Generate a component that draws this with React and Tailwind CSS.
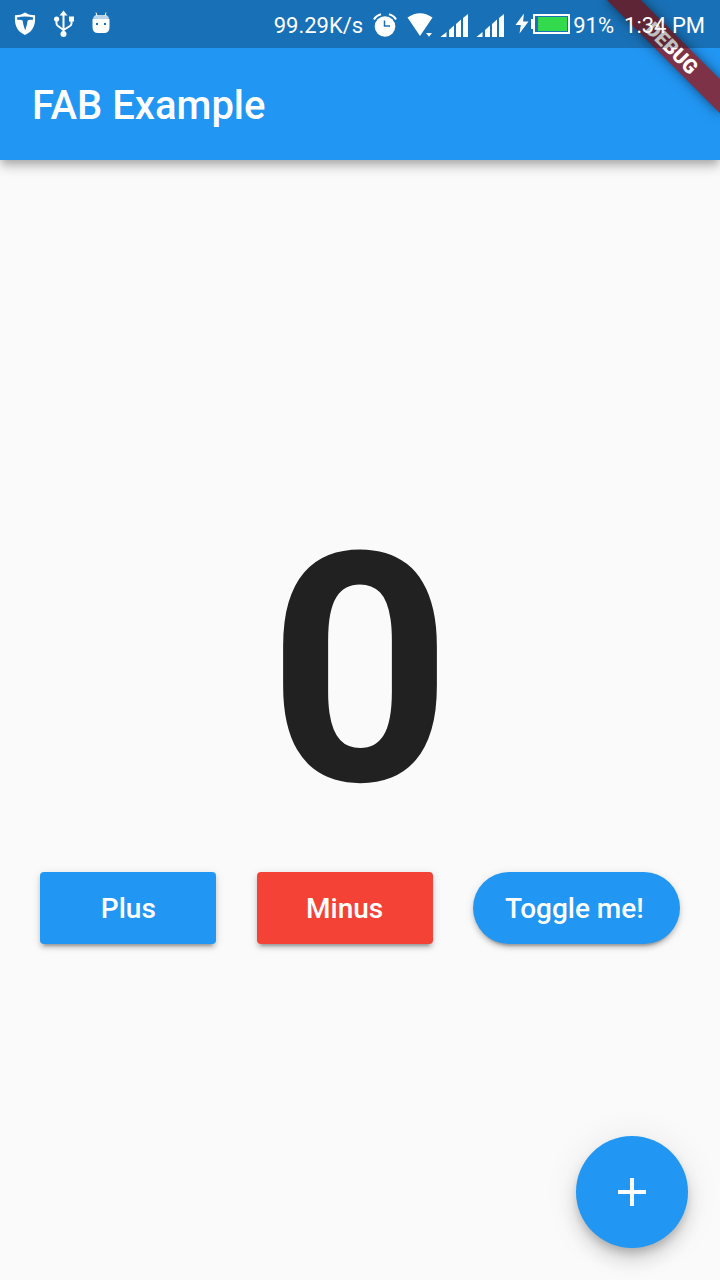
import { useState } from "react";

function ShieldIcon() {
  return (
    <svg width="22" height="24" viewBox="0 0 22 24" aria-hidden="true">
      <path d="M11 0.5 C14 2.6 17.5 3.2 21 3.3 C21.6 12 20 19 11 23 C2 19 0.4 12 1 3.3 C4.500 3.200 8 2.600 11 0.500 Z" fill="#fff" />
      <path d="M3 5.600 Q11 3.600 19.300 5.600 L18.700 8 Q15.500 7.200 13.700 8.400 Q13 13 11.200 18.500 Q9.200 13 8.600 8.400 Q6.500 7.200 3.500 8 Z" fill="#1b71b6" />
    </svg>
  );
}

function UsbIcon() {
  return (
    <svg width="20" height="28" viewBox="0 0 20 28" aria-hidden="true">
      <path d="M9.500 4 V24 M2.500 9 V13.500 Q2.500 15 4 16 L9.500 20 M17.500 9 V13.500 Q17.500 15 16 16 L9.500 20" fill="none" stroke="#fff" strokeWidth="2" />
      <path d="M9.500 0.500 L13.500 5.500 H5.500 Z" fill="#fff" />
      <circle cx="2.600" cy="9" r="2.600" fill="#fff" />
      <rect x="15" y="6.500" width="5" height="5" fill="#fff" />
      <circle cx="9.500" cy="24" r="3" fill="#fff" />
    </svg>
  );
}

function AndroidIcon() {
  return (
    <svg width="18" height="24" viewBox="0 0 18 24" aria-hidden="true">
      <path d="M4 0.500 L5 4 M14 0.500 L13 4" stroke="#fff" strokeWidth="1" />
      <path d="M1 8 Q1 3 5 3 H13 Q17 3 17 8 Z" fill="#fff" fillOpacity="0.7" />
      <path d="M0.500 7 H17.500 V15 Q17.500 21 12 21 H6 Q0.500 21 0.500 15 Z" fill="#fff" />
      <rect x="4" y="11" width="2" height="2" fill="#1b71b6" />
      <rect x="12" y="11" width="2" height="2" fill="#1b71b6" />
    </svg>
  );
}

function AlarmIcon() {
  return (
    <svg width="24" height="24" viewBox="0 0 24 24" aria-hidden="true">
      <circle cx="12" cy="13.500" r="10.300" fill="#fff" />
      <path d="M1 6.500 Q3 2.500 8 1.200 M23 6.500 Q21 2.500 16 1.200" fill="none" stroke="#fff" strokeWidth="2" />
      <path d="M11.500 7.500 V13 H17" fill="none" stroke="#1b71b6" strokeWidth="1.500" />
    </svg>
  );
}

function WifiIcon() {
  return (
    <svg width="27" height="24" viewBox="0 0 27 24" aria-hidden="true">
      <path d="M0.500 4.500 Q13 -4.200 25.500 4.500 L13 23 Z" fill="#fff" />
      <path d="M18.500 19 H27 L22 24.500 L17 19 Z" fill="#1b71b6" />
      <path d="M19 20 H25 L22 23.800 Z" fill="#fff" />
    </svg>
  );
}

function SignalIcon() {
  return (
    <svg width="29" height="24" viewBox="0 0 29 24" aria-hidden="true">
      <path d="M0.500 24 L6.500 19 V24 Z M9 24 V17 L14 12.500 V24 Z M16 24 V11 L21 6.500 V24 Z M23 24 V5 L28 1 V24 Z" fill="#fff" />
    </svg>
  );
}

function BatteryIcon() {
  return (
    <svg width="55" height="24" viewBox="0 0 55 24" aria-hidden="true">
      <path d="M9 0.500 L0.500 12 H5.800 L4.500 20.500 L13.500 8.500 H8 Z" fill="#fff" />
      <rect x="16" y="6" width="4" height="10" fill="#fff" />
      <rect x="19" y="2" width="35" height="18" fill="#1b71b6" stroke="#fff" strokeWidth="2" />
      <rect x="23" y="4" width="29" height="14" fill="#33db4c" />
    </svg>
  );
}

function StatusBar() {
  return (
    <div className="relative z-20 flex h-12 items-center justify-between bg-black/25 pl-[14px] pr-[15px] text-[22px] leading-6 text-white">
      <div className="flex items-center gap-[18px]">
        <ShieldIcon />
        <UsbIcon />
        <AndroidIcon />
      </div>
      <div className="flex items-center gap-[10px] pt-[2px]">
        <span className="pt-[2px]">99.29K/s</span>
        <AlarmIcon />
        <WifiIcon />
        <div className="-ml-1 flex gap-[7px]">
          <SignalIcon />
          <SignalIcon />
        </div>
        <div className="flex items-center gap-[3px]">
          <BatteryIcon />
          <span className="pt-[2px]">91%</span>
        </div>
        <span className="pt-[2px]">1:34 PM</span>
      </div>
    </div>
  );
}

function DebugBanner() {
  return (
    <div className="pointer-events-none absolute -right-20 top-14 z-10 flex h-6 w-40 origin-[80px_-56px] rotate-45 items-center justify-center bg-[#7e3248] text-[20px] font-black leading-6 text-white shadow-[0_0_12px_rgba(0,0,0,0.5)]">
      DEBUG
    </div>
  );
}

const buttonBase =
  "flex h-[72px] min-w-44 items-center justify-center pt-[2px] text-[28px] font-medium leading-8 text-white shadow-[0_6px_2px_-4px_rgba(0,0,0,0.2),0_4px_4px_rgba(0,0,0,0.14),0_2px_10px_rgba(0,0,0,0.12)]";

export default function App() {
  const [count, setCount] = useState(0);
  const [showFab, setShowFab] = useState(true);

  return (
    <div className="relative flex min-h-screen flex-col overflow-hidden bg-[#fafafa] font-['Roboto',sans-serif]">
      <header className="bg-[#2196f3] shadow-[0_4px_8px_-2px_rgba(0,0,0,0.2),0_8px_10px_rgba(0,0,0,0.14),0_2px_16px_rgba(0,0,0,0.08)]">
        <StatusBar />
        <div className="flex h-28 items-center px-8 pt-1">
          <h1 className="text-[40px] font-medium leading-[48px] text-white">FAB Example</h1>
        </div>
      </header>
      <DebugBanner />

      <main className="flex flex-1 flex-col items-center justify-center">
        <output className="block pb-[2px] text-[320px] font-bold leading-[374px] text-[#212121]">{count}</output>
        <div className="flex w-full justify-evenly py-3">
          <button type="button" onClick={() => setCount(count + 1)} className={`${buttonBase} rounded-[4px] bg-[#2196f3] px-8`}>
            Plus
          </button>
          <button type="button" onClick={() => setCount(count - 1)} className={`${buttonBase} rounded-[4px] bg-[#f44336] px-8`}>
            Minus
          </button>
          <button type="button" onClick={() => setShowFab(!showFab)} className={`${buttonBase} rounded-full bg-[#2196f3] pl-8 pr-9`}>
            Toggle me!
          </button>
        </div>
      </main>

      {showFab && (
        <button
          type="button"
          aria-label="Add"
          onClick={() => setCount(count + 1)}
          className="fixed bottom-8 right-8 flex size-28 items-center justify-center rounded-full bg-[#2196f3] shadow-[0_6px_10px_-2px_rgba(0,0,0,0.2),0_12px_20px_rgba(0,0,0,0.14),0_2px_36px_rgba(0,0,0,0.08)]"
        >
          <svg width="48" height="48" viewBox="0 0 24 24" fill="#fff" aria-hidden="true">
            <path d="M19 13h-6v6h-2v-6H5v-2h6V5h2v6h6z" />
          </svg>
        </button>
      )}
    </div>
  );
}
